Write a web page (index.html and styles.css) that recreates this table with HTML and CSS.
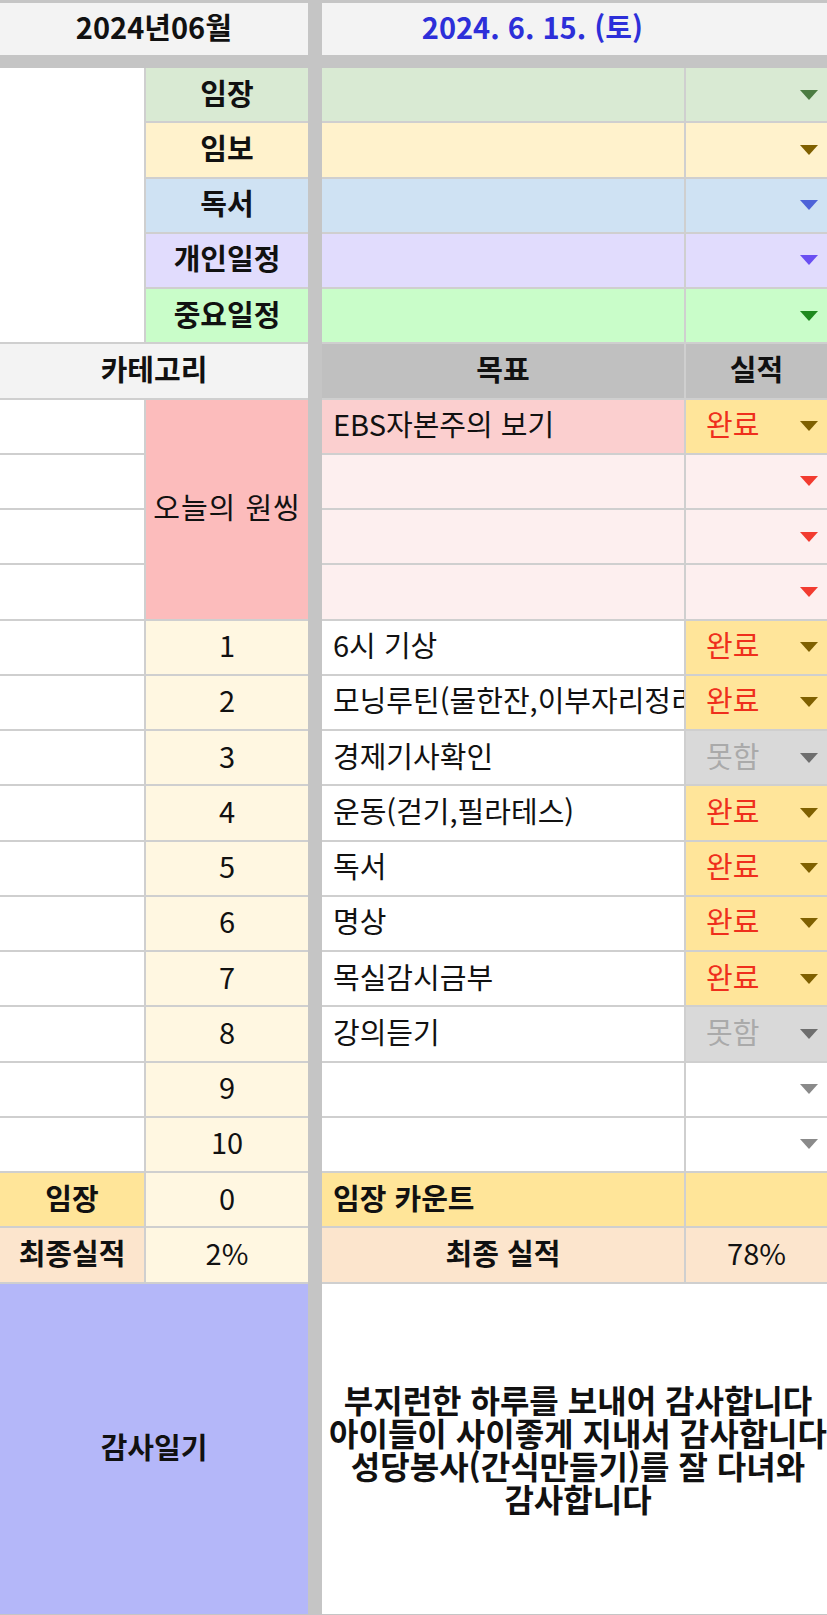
FILE: index.html
```html
<!DOCTYPE html>
<html lang="ko">
<head>
    <meta charset="UTF-8">
    <meta name="viewport" content="width=device-width, initial-scale=1.0">
    <title>2024년06월 데일리 체크</title>
    <link rel="stylesheet" href="styles.css">
</head>
<body>
    <header class="top">
        <div class="top-cell month">2024년06월</div>
        <div class="top-gap"></div>
        <div class="top-cell date">2024. 6. 15. (토)</div>
    </header>

    <main class="sheet">
        <div class="divider"></div>

        <!-- 카테고리 색상 -->
        <div class="cell c1 blank-top"></div>
        <div class="cell c2 label green">임장</div>
        <div class="cell goal green"></div>
        <div class="cell res green"><span class="arrow ar-green"></span></div>

        <div class="cell c2 label yellow">임보</div>
        <div class="cell goal yellow"></div>
        <div class="cell res yellow"><span class="arrow ar-brown"></span></div>

        <div class="cell c2 label blue">독서</div>
        <div class="cell goal blue"></div>
        <div class="cell res blue"><span class="arrow ar-blue"></span></div>

        <div class="cell c2 label lavender">개인일정</div>
        <div class="cell goal lavender"></div>
        <div class="cell res lavender"><span class="arrow ar-purple"></span></div>

        <div class="cell c2 label mint">중요일정</div>
        <div class="cell goal mint"></div>
        <div class="cell res mint"><span class="arrow ar-mint"></span></div>

        <!-- 헤더 -->
        <div class="cell c12 label head-light">카테고리</div>
        <div class="cell goal label center head-dark">목표</div>
        <div class="cell res label center head-dark">실적</div>

        <!-- 오늘의 원씽 -->
        <div class="cell c1"></div>
        <div class="cell c2 one-thing">오늘의 원씽</div>
        <div class="cell goal pink">EBS자본주의 보기</div>
        <div class="cell res done"><span>완료</span><span class="arrow ar-brown"></span></div>

        <div class="cell c1"></div>
        <div class="cell goal pale-pink"></div>
        <div class="cell res pale-pink"><span class="arrow ar-red"></span></div>

        <div class="cell c1"></div>
        <div class="cell goal pale-pink"></div>
        <div class="cell res pale-pink"><span class="arrow ar-red"></span></div>

        <div class="cell c1"></div>
        <div class="cell goal pale-pink"></div>
        <div class="cell res pale-pink"><span class="arrow ar-red"></span></div>

        <!-- 루틴 -->
        <div class="cell c1"></div>
        <div class="cell c2 num">1</div>
        <div class="cell goal">6시 기상</div>
        <div class="cell res done"><span>완료</span><span class="arrow ar-brown"></span></div>

        <div class="cell c1"></div>
        <div class="cell c2 num">2</div>
        <div class="cell goal">모닝루틴(물한잔,이부자리정리)</div>
        <div class="cell res done"><span>완료</span><span class="arrow ar-brown"></span></div>

        <div class="cell c1"></div>
        <div class="cell c2 num">3</div>
        <div class="cell goal">경제기사확인</div>
        <div class="cell res missed"><span>못함</span><span class="arrow ar-gray"></span></div>

        <div class="cell c1"></div>
        <div class="cell c2 num">4</div>
        <div class="cell goal">운동(걷기,필라테스)</div>
        <div class="cell res done"><span>완료</span><span class="arrow ar-brown"></span></div>

        <div class="cell c1"></div>
        <div class="cell c2 num">5</div>
        <div class="cell goal">독서</div>
        <div class="cell res done"><span>완료</span><span class="arrow ar-brown"></span></div>

        <div class="cell c1"></div>
        <div class="cell c2 num">6</div>
        <div class="cell goal">명상</div>
        <div class="cell res done"><span>완료</span><span class="arrow ar-brown"></span></div>

        <div class="cell c1"></div>
        <div class="cell c2 num">7</div>
        <div class="cell goal">목실감시금부</div>
        <div class="cell res done"><span>완료</span><span class="arrow ar-brown"></span></div>

        <div class="cell c1"></div>
        <div class="cell c2 num">8</div>
        <div class="cell goal">강의듣기</div>
        <div class="cell res missed"><span>못함</span><span class="arrow ar-gray"></span></div>

        <div class="cell c1"></div>
        <div class="cell c2 num">9</div>
        <div class="cell goal"></div>
        <div class="cell res"><span class="arrow ar-light"></span></div>

        <div class="cell c1"></div>
        <div class="cell c2 num">10</div>
        <div class="cell goal"></div>
        <div class="cell res"><span class="arrow ar-light"></span></div>

        <!-- 합계 -->
        <div class="cell c1 label center gold">임장</div>
        <div class="cell c2 num gold">0</div>
        <div class="cell goal label gold">임장 카운트</div>
        <div class="cell res gold"></div>

        <div class="cell c1 label center peach">최종실적</div>
        <div class="cell c2 num peach">2%</div>
        <div class="cell goal label center peach">최종 실적</div>
        <div class="cell res center peach">78%</div>

        <!-- 감사일기 -->
        <div class="cell c12 label periwinkle">감사일기</div>
        <div class="cell thanks">
            <p>부지런한 하루를 보내어 감사합니다<br>
            아이들이 사이좋게 지내서 감사합니다<br>
            성당봉사(간식만들기)를 잘 다녀와<br>
            감사합니다</p>
        </div>
    </main>
</body>
</html>
```

FILE: styles.css
```css
/* General styles */
body {
    margin: 0;
    padding: 0;
    background-color: #c5c5c5; /* sheet frame gray */
    font-family: "Noto Sans CJK KR", "Noto Sans", sans-serif;
    font-size: 29px;
    color: #111;
    overflow: hidden;
}

/* Top date bar */
.top {
    display: grid;
    grid-template-columns: 307.7px 14px 1fr;
    height: 52px;
    margin: 3px 0 13px;
}

.top-cell {
    background-color: #f3f3f3;
    display: flex;
    align-items: center;
    justify-content: center;
    font-weight: bold;
    padding-bottom: 6px;
}

.date {
    color: #2d2fd9;
    padding-right: 84px;
}

/* Main grid */
.sheet {
    display: grid;
    grid-template-columns: 144px 162px 10px 362px 1fr;
    grid-template-rows: repeat(22, 53.25px) 330px;
    gap: 2px;
    background-color: #cfcfcf; /* grid lines */
}

.divider {
    grid-column: 3;
    grid-row: 1 / -1;
    margin: 0 -2px;
    background-color: #c5c5c5;
}

.cell {
    background-color: #fff;
    display: flex;
    align-items: center;
    white-space: nowrap;
    overflow: hidden;
    padding-bottom: 6px;
    box-sizing: border-box;
}

.c1 { grid-column: 1; }
.c2 { grid-column: 2; justify-content: center; }
.c12 { grid-column: 1 / span 2; justify-content: center; }
.goal { grid-column: 4; padding-left: 11px; }
.res { grid-column: 5; justify-content: flex-end; padding-left: 20px; padding-right: 9px; }

.blank-top { grid-row: span 5; }

.label { font-weight: bold; }
.center { justify-content: center; padding-left: 0; padding-right: 0; }

/* Colours */
.green { background-color: #d9ead3; }
.yellow { background-color: #fff2cc; }
.blue { background-color: #cfe2f3; }
.lavender { background-color: #e1dcfd; }
.mint { background-color: #c9fdc9; }
.head-light { background-color: #f3f3f3; }
.head-dark { background-color: #c0c0c0; }
.pink { background-color: #fbcfcf; }
.pale-pink { background-color: #fdefef; }
.gold { background-color: #ffe599; }
.peach { background-color: #fce5cd; }
.periwinkle { background-color: #b4b7f9; }

.one-thing {
    grid-row: span 4;
    background-color: #fcbcbc;
    letter-spacing: 1px;
}

.num { background-color: #fff7e1; }

/* Dropdown chips */
.done {
    background-color: #ffe59a;
    color: #ef2f1c;
    justify-content: space-between;
}

.missed {
    background-color: #d9d9d9;
    color: #aaa;
    justify-content: space-between;
}

.arrow {
    width: 0;
    height: 0;
    margin-top: 6px;
    border-left: 9px solid transparent;
    border-right: 9px solid transparent;
    border-top: 10px solid #808080;
}

.ar-green { border-top-color: #4c7c42; }
.ar-brown { border-top-color: #7f6000; }
.ar-blue { border-top-color: #4e63d8; }
.ar-purple { border-top-color: #6a4ff2; }
.ar-mint { border-top-color: #1e8a1e; }
.ar-red { border-top-color: #f23b30; }
.ar-gray { border-top-color: #6e6e6e; }
.ar-light { border-top-color: #8a8a8a; }

/* Gratitude journal */
.thanks {
    grid-column: 4 / span 2;
    justify-content: center;
    padding-left: 7px;
    padding-bottom: 0;
}

.thanks p {
    margin: 0;
    font-size: 32px;
    line-height: 33px;
    font-weight: bold;
    text-align: center;
}
```
